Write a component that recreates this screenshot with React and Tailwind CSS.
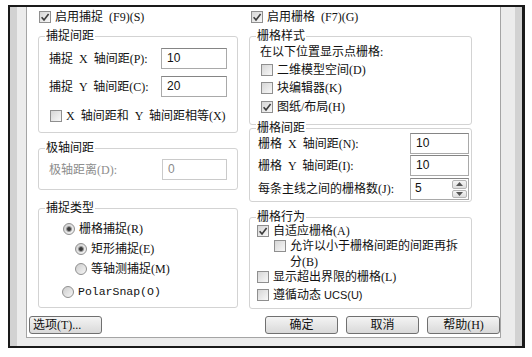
import React from 'react';

const Check = ({ checked }) => (
  <span className="flex h-[12px] w-[12px] shrink-0 items-center justify-center border border-[#8f8f8f] bg-gradient-to-br from-[#d6d6d6] to-[#f8f8f8]">
    {checked && (
      <svg viewBox="0 0 10 10" className="h-[10px] w-[10px]">
        <path d="M1.6 5.3 L4 7.9 L8.6 1.9" fill="none" stroke="#3d3d3d" strokeWidth="1.6" />
      </svg>
    )}
  </span>
);

const Radio = ({ checked }) => (
  <span className="flex h-[12px] w-[12px] shrink-0 items-center justify-center rounded-full border border-[#8f8f8f] bg-gradient-to-br from-[#cdcdcd] to-[#f5f5f5]">
    {checked && <span className="h-[6px] w-[6px] rounded-full border border-[#9a9a9a] bg-[#3a3a3a]" />}
  </span>
);

const Group = ({ title, className, children }) => (
  <div className={`relative rounded-[3px] border border-[#d3d3d3] ${className}`}>
    <span className="absolute -top-[8px] left-[6px] bg-white px-[1px] leading-[14px]">{title}</span>
    {children}
  </div>
);

const Field = ({ value, disabled, className }) => (
  <div
    className={`h-[21px] shrink-0 border bg-white pl-[5px] pt-[2px] font-['Liberation_Sans',sans-serif] text-[12px] leading-[14px] ${
      disabled ? 'border-[#cacaca] text-[#8a8a8a]' : 'border-[#a9a9a9] border-t-[#858585] text-[#111]'
    } ${className}`}
  >
    {value}
  </div>
);

const Btn = ({ children, className }) => (
  <div className={`h-[18px] rounded-[3px] border border-[#707070] bg-gradient-to-b from-[#f4f4f4] to-[#d9d9d9] leading-[16px] ${className}`}>
    {children}
  </div>
);

const Row = ({ children, className }) => (
  <div className={`flex h-[14px] items-center gap-[4px] whitespace-pre ${className}`}>{children}</div>
);

export default function App() {
  return (
    <div className="h-[357px] w-[532px] bg-white pl-[8px] pt-[5px] font-['Liberation_Serif','Noto_Sans_CJK_SC',serif] text-[12px] leading-[14px] text-[#111]">
      <div className="flex h-[343px] w-[517px] border-b-2 border-l-2 border-r-[3px] border-t-2 border-[#1a1a1a]">
        <div className="flex w-[16px]">
          <div className="w-[7px] bg-[#d2d2d2]" />
          <div className="w-[9px] bg-[#ececec]" />
        </div>

        <div className="flex w-[475px] flex-col">
          <div className="flex h-[331px] flex-col border-x border-b border-[#a5a5a5] bg-white">
            <div className="pl-[11px]">
              <div className="flex h-[19px] items-center gap-[11px]">
                <Row className="w-[200px] pl-[1px]">
                  <Check checked />
                  <span>启用捕捉  (F9)(S)</span>
                </Row>
                <Row className="w-[223px] pl-[2px]">
                  <Check checked />
                  <span>启用栅格  (F7)(G)</span>
                </Row>
              </div>

              <div className="mt-[10px] flex gap-[11px]">
                {/* left column */}
                <div className="flex w-[200px] flex-col">
                  <Group title="捕捉间距" className="h-[97px] px-[10px] pt-[11px]">
                    <div className="flex h-[21px] items-center justify-between whitespace-pre">
                      <span>捕捉  X  轴间距(P):</span>
                      <Field value="10" className="w-[66px]" />
                    </div>
                    <div className="mt-[7px] flex h-[21px] items-center justify-between whitespace-pre">
                      <span>捕捉  Y  轴间距(C):</span>
                      <Field value="20" className="w-[66px]" />
                    </div>
                    <Row className="mt-[12px] pl-[1px]">
                      <Check />
                      <span>X  轴间距和  Y  轴间距相等(X)</span>
                    </Row>
                  </Group>

                  <Group title="极轴间距" className="mt-[15px] h-[42px] px-[10px] pt-[10px]">
                    <div className="flex h-[21px] items-center justify-between">
                      <span className="text-[#8d8d8d]">极轴距离(D):</span>
                      <Field value="0" disabled className="w-[65px]" />
                    </div>
                  </Group>

                  <Group title="捕捉类型" className="mt-[18px] h-[100px] pt-[13px]">
                    <Row className="pl-[24px]">
                      <Radio checked />
                      <span>栅格捕捉(R)</span>
                    </Row>
                    <Row className="mt-[6px] pl-[36px]">
                      <Radio checked />
                      <span>矩形捕捉(E)</span>
                    </Row>
                    <Row className="mt-[6px] pl-[36px]">
                      <Radio />
                      <span>等轴测捕捉(M)</span>
                    </Row>
                    <Row className="mt-[9px] pl-[23px]">
                      <Radio />
                      <span className="font-['Liberation_Mono',monospace] text-[11.5px]">PolarSnap(O)</span>
                    </Row>
                  </Group>
                </div>

                {/* right column */}
                <div className="flex w-[223px] flex-col">
                  <Group title="栅格样式" className="h-[89px] pl-[10px] pt-[8px]">
                    <Row>在以下位置显示点栅格:</Row>
                    <Row className="mt-[4px] pl-[1px]">
                      <Check />
                      <span>二维模型空间(D)</span>
                    </Row>
                    <Row className="mt-[4px] pl-[1px]">
                      <Check />
                      <span>块编辑器(K)</span>
                    </Row>
                    <Row className="mt-[5px] pl-[1px]">
                      <Check checked />
                      <span>图纸/布局(H)</span>
                    </Row>
                  </Group>

                  <Group title="栅格间距" className="mt-[3px] h-[74px] pl-[8px] pr-[2px] pt-[4px]">
                    <div className="flex h-[21px] items-center justify-between whitespace-pre">
                      <span>栅格  X  轴间距(N):</span>
                      <Field value="10" className="w-[59px]" />
                    </div>
                    <div className="mt-[1px] flex h-[21px] items-center justify-between whitespace-pre">
                      <span>栅格  Y  轴间距(I):</span>
                      <Field value="10" className="w-[59px]" />
                    </div>
                    <div className="mt-[2px] flex h-[22px] items-center justify-between">
                      <span>每条主线之间的栅格数(J):</span>
                      <div className="flex h-[22px] w-[59px] border border-[#a9a9a9] border-t-[#858585] bg-white">
                        <span className="flex-1 pl-[4px] pt-[2px] font-['Liberation_Sans',sans-serif]">5</span>
                        <div className="flex w-[17px] flex-col gap-[1px] p-[1px]">
                          <div className="flex flex-1 items-center justify-center rounded-[2px] border border-[#b5b5b5] bg-gradient-to-b from-[#f5f5f5] to-[#dedede]">
                            <svg viewBox="0 0 7 4" className="h-[4px] w-[7px]">
                              <path d="M0 4 L3.5 0 L7 4 Z" fill="#555" />
                            </svg>
                          </div>
                          <div className="flex flex-1 items-center justify-center rounded-[2px] border border-[#b5b5b5] bg-gradient-to-b from-[#f5f5f5] to-[#dedede]">
                            <svg viewBox="0 0 7 4" className="h-[4px] w-[7px]">
                              <path d="M0 0 L3.5 4 L7 0 Z" fill="#555" />
                            </svg>
                          </div>
                        </div>
                      </div>
                    </div>
                  </Group>

                  <Group title="栅格行为" className="mt-[15px] h-[92px] pl-[7px] pt-[6px]">
                    <Row>
                      <Check checked />
                      <span>自适应栅格(A)</span>
                    </Row>
                    <div className="flex items-start gap-[4px] pl-[17px] leading-[16px]">
                      <span className="mt-[2px]">
                        <Check />
                      </span>
                      <span>
                        允许以小于栅格间距的间距再拆
                        <br />
                        分(B)
                      </span>
                    </div>
                    <Row>
                      <Check />
                      <span>显示超出界限的栅格(L)</span>
                    </Row>
                    <Row className="mt-[4px]">
                      <Check />
                      <span>
                        遵循动态 <span className="font-['Liberation_Sans',sans-serif] text-[11px]">UCS(U)</span>
                      </span>
                    </Row>
                  </Group>
                </div>
              </div>
            </div>

            <div className="mb-[3px] mt-auto flex items-center justify-between pl-[2px]">
              <Btn className="w-[73px] pl-[3px]">选项(T)...</Btn>
              <div className="flex gap-[8px]">
                <Btn className="w-[73px] text-center">确定</Btn>
                <Btn className="w-[73px] text-center">取消</Btn>
                <Btn className="w-[73px] text-center">帮助(H)</Btn>
              </div>
            </div>
          </div>
          <div className="flex-1 bg-[#ececec]" />
        </div>

        <div className="flex w-[21px]">
          <div className="w-[14px] bg-[#ececec]" />
          <div className="w-[7px] bg-[#d2d2d2]" />
        </div>
      </div>
    </div>
  );
}
